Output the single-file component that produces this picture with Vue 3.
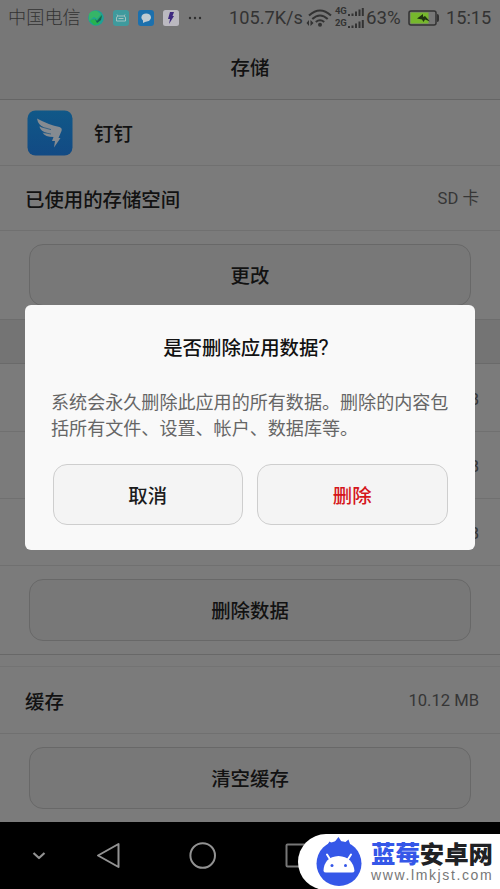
<script setup>
const usageRows = [1, 2, 3]
</script>

<template>
  <div class="screen">
    <header class="status">
      <span class="carrier">中国电信</span>
      <svg class="notif" viewBox="0 0 16 16">
        <circle cx="8" cy="8" r="7.8" fill="#1fa096" />
        <path d="M1 4Q4 0 9 1L13 4 9 9 6 7 1 11Z" fill="#35b568" />
        <path d="M5 9l4 1 4-5 1 2-3 7-5 1-4-4Z" fill="#26b34e" />
        <path d="M7 9l2 2 5-6-1 5-4 3Z" fill="#125f5b" />
      </svg>
      <svg class="notif" viewBox="0 0 16 16">
        <rect width="16" height="16" rx="3" fill="#3f9a9d" />
        <path d="M3.500 11V8Q3.500 6 5.500 6h5Q12.500 6 12.500 8v3ZM5.500 8.500h5M5 6 4 4.500M11 6l1-1.500" fill="none" stroke="#a4c1c1" />
      </svg>
      <svg class="notif" viewBox="0 0 16 16">
        <rect width="16" height="16" rx="3" fill="#1c70ad" />
        <ellipse cx="8.200" cy="7.400" rx="4.800" ry="4" fill="#c0cbd2" />
        <path d="M5 9v4l4-2Z" fill="#c0cbd2" />
      </svg>
      <svg class="notif" viewBox="0 0 16 16">
        <rect width="16" height="16" rx="2.500" fill="#bbb9c0" />
        <path d="M7 2h4L9.500 6H11L6 14 7 9H5Z" fill="#3d287f" />
      </svg>
      <svg class="dots" viewBox="0 0 14 4">
        <circle cx="2" cy="2" r="1.200" /><circle cx="7" cy="2" r="1.200" /><circle cx="12" cy="2" r="1.200" />
      </svg>
      <span class="speed">105.7K/s</span>
      <svg class="wifi" viewBox="0 0 26 20">
        <g fill="none" stroke="#333" stroke-width="2.100">
          <path d="M3 7.500Q14 -2.500 25 7.500" />
          <path d="M6.300 11Q14 4 21.700 11" />
          <path d="M9.800 14Q14 10.500 18.200 14" />
        </g>
        <circle cx="14" cy="16.700" r="2" fill="#333" />
        <path d="M0.500 15l2.500-3V18ZM4.500 12V18L7.500 15Z" fill="#333" />
      </svg>
      <span class="signals">
        <span v-for="net in ['4G', '2G']" :key="net" class="signal">
          <b>{{ net }}</b>
          <svg viewBox="0 0 16 9">
            <path d="M0 7h2v2H0ZM3.500 6.500h2V9h-2ZM7 4.500h2V9H7ZM10.500 2.500h2V9h-2ZM13.800 1h2v8h-2Z" fill="#333" />
          </svg>
        </span>
      </span>
      <span class="percent">63%</span>
      <svg class="battery" viewBox="0 0 32 16">
        <rect x="1" y="1" width="27" height="14" rx="2" fill="none" stroke="#333" stroke-width="1.500" />
        <rect x="2.500" y="2.500" width="18" height="11" fill="#76b82c" />
        <path d="M29 4q2 0 2 2v4q0 2-2 2Z" fill="#333" />
        <path d="M9 8.500 15 4V7L17 6 22 11.500 17 9.500 15.500 12 14 9.500Z" fill="#203411" />
      </svg>
      <span class="clock">15:15</span>
    </header>

    <div class="title">存储</div>

    <div class="row app">
      <svg class="app-icon" viewBox="0 0 46 46">
        <defs>
          <linearGradient id="app-bg" x1="0" y1="0" x2="0" y2="1">
            <stop offset="0" stop-color="#105888" />
            <stop offset="1" stop-color="#124a84" />
          </linearGradient>
        </defs>
        <rect x="0.500" y="0.500" width="45" height="45" rx="8" fill="url(#app-bg)" />
        <path d="M10 8.500Q22 15 32.500 17Q35.500 18 34.500 21L31.500 28H33.500L27 37.500L28 31H25L26.500 27Q18 27 15.500 22.500L20 23Q14 21.500 12.300 16.500L17 17.500Q11 15 10 8.500Z" fill="#858b91" />
        <path d="M14 16.800 24 19.600M16 22.500 24 24" stroke="#16527f" stroke-width=".7" />
      </svg>
      <span>钉钉</span>
    </div>
    <div class="row used"><span>已使用的存储空间</span><span class="value">SD 卡</span></div>
    <div class="action"><button>更改</button></div>
    <div class="band"></div>
    <div v-for="row in usageRows" :key="row" class="row data"><span class="value">B</span></div>
    <div class="action clear"><button>删除数据</button></div>
    <div class="gap"></div>
    <div class="row cache"><span>缓存</span><span class="value">10.12 MB</span></div>
    <div class="action last"><button>清空缓存</button></div>

    <nav class="nav">
      <svg viewBox="0 0 330 67" fill="none" stroke="#929292" stroke-linejoin="round">
        <path d="M33.500 31 39 36 44.500 31" stroke-width="2.200" />
        <path d="M98 33.500 118.500 22V45Z" stroke-width="2" />
        <circle cx="202.700" cy="33.500" r="12.300" stroke-width="2" />
        <rect x="286.500" y="22.500" width="22" height="22" rx="1" stroke-width="2" stroke="#777" />
      </svg>
    </nav>

    <section class="dialog">
      <h2>是否删除应用数据<span class="mark">?</span></h2>
      <p>系统会永久删除此应用的所有数据。删除的内容包括所有文件、设置、帐户、数据库等。</p>
      <div class="choices">
        <button>取消</button>
        <button class="danger">删除</button>
      </div>
    </section>

    <aside class="brand">
      <svg viewBox="0 0 46 50">
        <circle cx="23" cy="26.500" r="22.500" fill="#3557e8" />
        <path d="M10 10 13.500 4.500 17 7 22.500 0 27 7 32.500 2.500 35 10 34 17H10Z" fill="#3557e8" />
        <path d="M7.500 34Q8 20 22.500 19Q37 20 38.500 34Q38 35.500 36 35.500H10Q8 35.500 7.500 34Z" fill="#fff" />
        <path d="M14.500 23 11 17.500M31.500 23 35 17.500" stroke="#fff" stroke-width="2" stroke-linecap="round" />
        <circle cx="16" cy="28.500" r="1.500" fill="#3557e8" /><circle cx="29.500" cy="28.500" r="1.500" fill="#3557e8" />
      </svg>
      <div class="brand-text">
        <strong><i>蓝莓</i>安卓网</strong>
        <small>www.lmkjst.com</small>
      </div>
    </aside>
  </div>
</template>

<style>
body { margin: 0; overflow: hidden; }
</style>

<style scoped>
* { box-sizing: border-box; }
.screen {
  position: relative;
  display: flex;
  flex-direction: column;
  width: 500px;
  height: 889px;
  overflow: hidden;
  background: #7b7b7b;
  color: #121212;
  font-family: Roboto, "Noto Sans CJK SC", sans-serif;
  font-size: 19.4px;
}
.status {
  display: flex;
  align-items: center;
  height: 35px;
  padding-left: 8px;
  background: #777;
  color: #333;
  font-size: 18px;
  white-space: nowrap;
}
.status > * { flex: none; }
.carrier { width: 80px; font-size: 18.2px; line-height: 20px; font-weight: 300; }
.notif { width: 16px; height: 16px; margin-right: 9px; }
.dots { width: 14px; height: 4px; fill: #303030; }
.speed { width: 76px; margin-left: 27px; font-size: 18.2px; }
.wifi { width: 26px; height: 20px; margin-left: 1px; }
.signals { display: flex; flex-direction: column; gap: 1px; width: 29px; height: 26px; margin-left: 3px; }
.signal { display: flex; align-items: flex-end; justify-content: space-between; height: 11px; }
.signal b { font-size: 9.5px; line-height: 11px; letter-spacing: -.3px; }
.signal svg { width: 16px; height: 9px; }
.percent { width: 41px; margin-left: 2px; font-size: 18.7px; }
.battery { width: 32px; height: 16px; margin-left: 1px; }
.clock { margin-left: 6px; font-size: 18.2px; }
.title {
  height: 65px;
  border-bottom: 1px solid #656565;
  background: #777;
  line-height: 67px;
  text-align: center;
  font-weight: 500;
}
.row {
  display: flex;
  align-items: center;
  justify-content: space-between;
  padding: 0 21px 0 25px;
  border-bottom: 1px solid #707070;
  font-weight: 500;
}
.value { color: #363636; font-size: 16.6px; font-weight: 400; }
.app { justify-content: flex-start; gap: 21px; height: 66px; padding-left: 27px; }
.app-icon { width: 46px; height: 46px; }
.used { height: 65px; }
.used .value { margin-top: -2px; }
.action { height: 88px; padding: 13px 29px 0; }
button {
  display: block;
  width: 100%;
  height: 62px;
  padding: 0 0 1px;
  border: 1px solid #686868;
  border-radius: 14px;
  background: #787878;
  color: #121212;
  font: inherit;
  font-weight: 500;
}
.band { height: 45px; border-top: 1px solid #6d6d6d; border-bottom: 1px solid #6a6a6a; background: #747474; }
.data { justify-content: flex-end; height: 67px; padding-top: 3px; }
.band + .data { height: 68px; }
.clear { height: 89px; border-bottom: 1px solid #686868; }
.gap { height: 12px; border-bottom: 1px solid #737373; }
.cache { height: 67px; padding-top: 1px; }
.last { height: 88px; }
.nav { height: 67px; background: #000; }
.nav svg { display: block; width: 330px; height: 67px; }
.dialog {
  position: absolute;
  top: 305px;
  left: 25px;
  width: 450px;
  height: 245px;
  padding: 29px 28px 0;
  border-radius: 6px;
  background: #f9f9f9;
}
h2 { margin: 0; padding-right: 8px; font-size: 19.4px; line-height: 30px; font-weight: 500; text-align: center; }
.mark { font-size: 22px; font-weight: 400; line-height: 1; }
p { width: 402px; margin: 26px 0 0 -2px; color: #666; font-size: 18.07px; line-height: 26px; word-break: break-all; }
.choices { display: flex; gap: 14px; width: 395px; margin: 22px 0 0 -.5px; }
.choices button { height: 61px; padding: 0; border-color: #cecece; background: #f4f4f4; color: #1c1c1c; }
.choices .danger { color: #d5161b; }
.brand {
  position: absolute;
  top: 834px;
  left: 298px;
  display: flex;
  gap: 9px;
  width: 210px;
  height: 56px;
  padding: 3px 0 0 18px;
  border-radius: 28px 0 0 28px;
  background: #fff;
}
.brand > svg { width: 46px; height: 50px; }
.brand-text { display: flex; flex-direction: column; padding-top: 4px; white-space: nowrap; }
strong { color: #202124; font-size: 24.4px; line-height: 27px; font-weight: 900; }
i { color: #3557e8; font-style: normal; }
small { color: #777; font-family: "Liberation Sans", sans-serif; font-size: 14px; line-height: 14px; letter-spacing: 1.62px; }
</style>
